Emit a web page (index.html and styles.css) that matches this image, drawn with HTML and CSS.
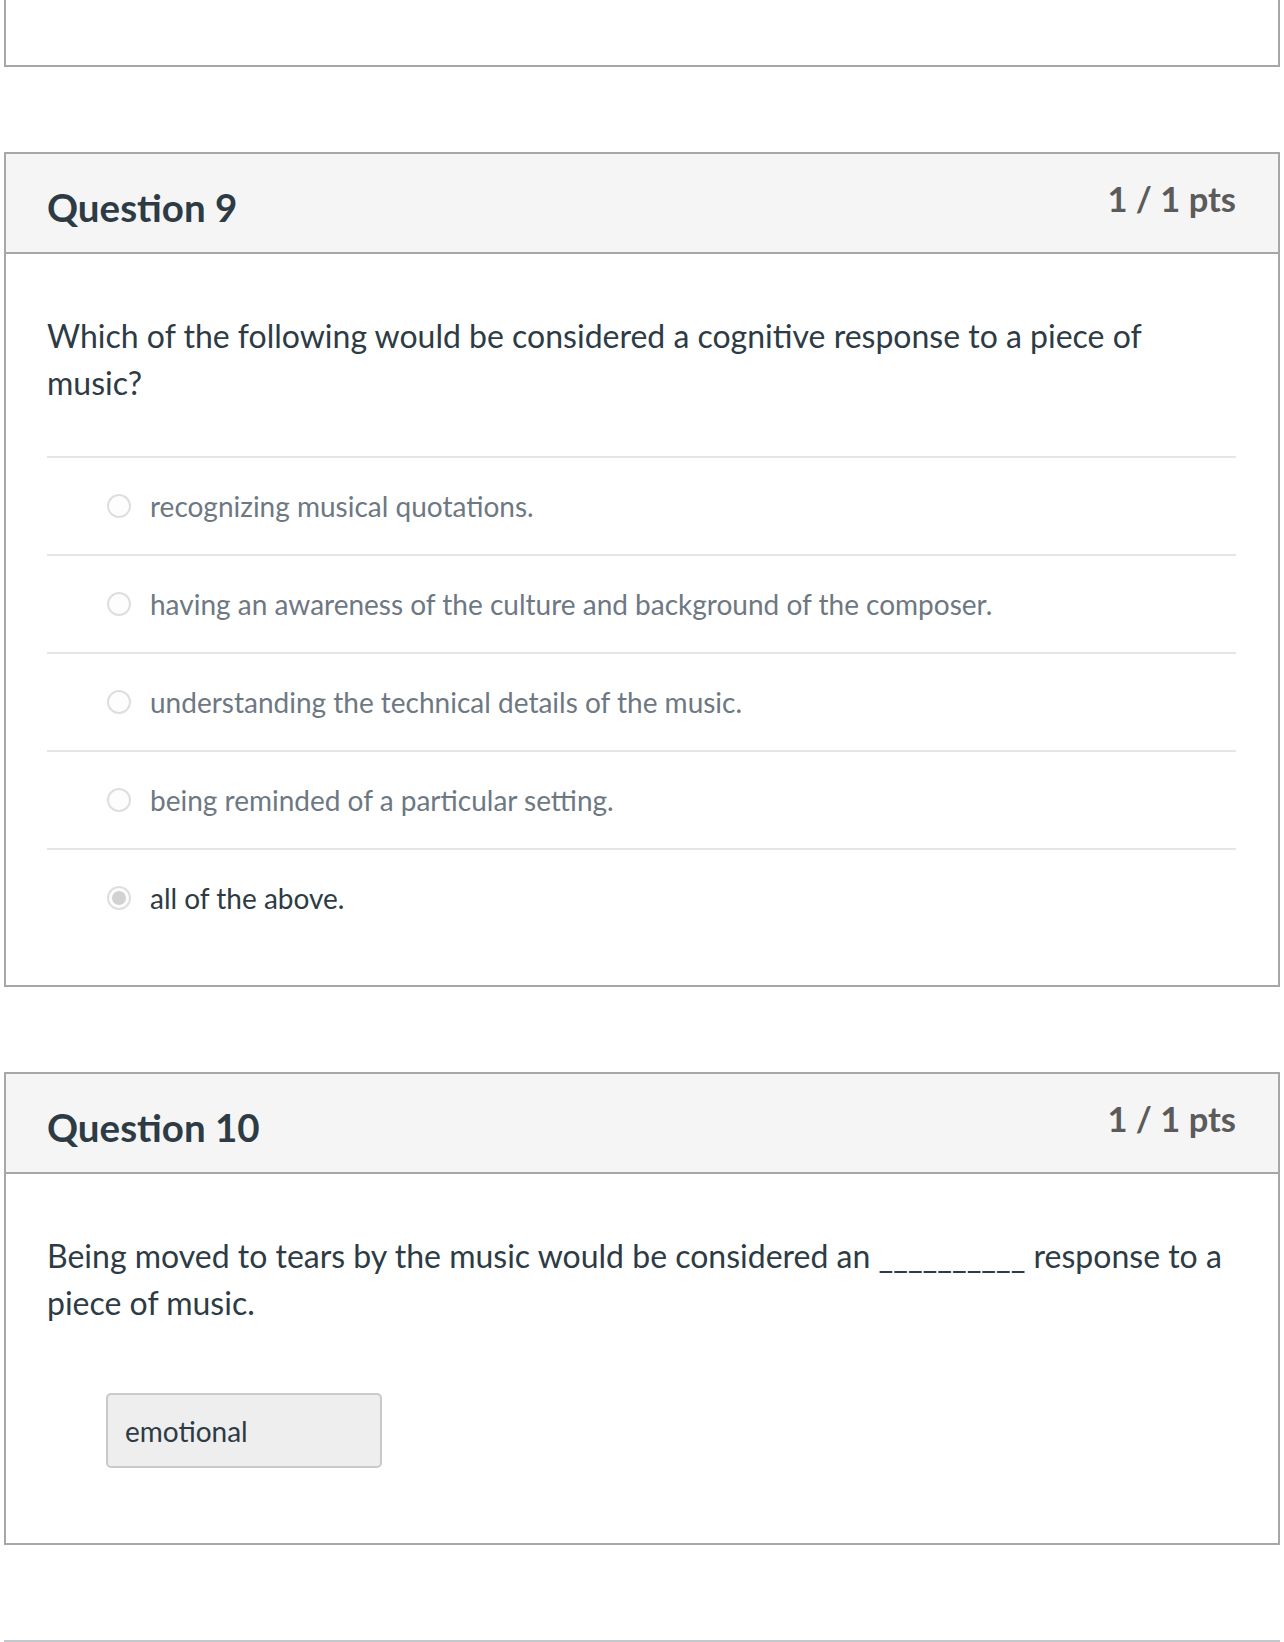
FILE: index.html
```html
<!DOCTYPE html>
<html lang="en">
<head>
<meta charset="utf-8">
<title>Quiz results</title>
<link rel="stylesheet" href="styles.css">
</head>
<body>
<div class="page">
  <div class="card card-prev"></div>

  <div class="card question">
    <div class="q-header">
      <h2 class="q-title">Question 9</h2>
      <div class="q-pts">1 / 1 pts</div>
    </div>
    <div class="q-body">
      <div class="q-text">Which of the following would be considered a cognitive response to a piece of music?</div>
      <div class="answers">
        <div class="answer"><span class="radio"></span><span class="answer-label">recognizing musical quotations.</span></div>
        <div class="answer"><span class="radio"></span><span class="answer-label">having an awareness of the culture and background of the composer.</span></div>
        <div class="answer"><span class="radio"></span><span class="answer-label">understanding the technical details of the music.</span></div>
        <div class="answer"><span class="radio"></span><span class="answer-label">being reminded of a particular setting.</span></div>
        <div class="answer answer-selected"><span class="radio radio-checked"></span><span class="answer-label">all of the above.</span></div>
      </div>
    </div>
  </div>

  <div class="card question card-last">
    <div class="q-header">
      <h2 class="q-title">Question 10</h2>
      <div class="q-pts">1 / 1 pts</div>
    </div>
    <div class="q-body q-body-fill">
      <div class="q-text">Being moved to tears by the music would be considered an __________ response to a piece of music.</div>
      <div class="fill-answer">emotional</div>
    </div>
  </div>

  <div class="card card-next"></div>
</div>
</body>
</html>
```

FILE: styles.css
```css
html, body {
  margin: 0;
  padding: 0;
  background: #ffffff;
}

body {
  font-family: Lato, "Open Sans", "Liberation Sans", sans-serif;
  color: #2d3b45;
  overflow: hidden;
}

.page {
  padding: 0 4px;
}

.card {
  border: 2px solid #a7a7a7;
  background: #ffffff;
  margin-bottom: 85px;
}

.card-prev {
  border-top: 0;
  height: 65px;
}

.card-last {
  margin-bottom: 95px;
}

.card-next {
  border-bottom: 0;
  border-left: 0;
  border-right: 0;
  border-color: #c3c8cc;
  height: 0;
  margin-bottom: 0;
}

.q-header {
  display: flex;
  justify-content: space-between;
  align-items: flex-start;
  height: 98px;
  padding: 0 42px 0 41px;
  background: #f5f5f5;
  border-bottom: 2px solid #a7a7a7;
}

.q-title {
  margin: 34px 0 0;
  font-size: 38.5px;
  line-height: 1;
  font-weight: 700;
  color: #2d3b45;
}

.q-pts {
  margin-top: 28px;
  font-size: 34.5px;
  line-height: 1;
  font-weight: 700;
  color: #5b5b5b;
}

.q-body {
  padding: 58px 42px 39px 41px;
}

.q-body-fill {
  padding-bottom: 75px;
}

.q-text {
  max-width: 1182px;
  font-size: 32px;
  line-height: 47px;
  color: #2d3b45;
  margin-bottom: 50px;
}

.q-body-fill .q-text {
  margin-bottom: 67px;
}

.answer {
  display: flex;
  align-items: center;
  border-top: 2px solid #e6e6e6;
  padding: 28px 0;
}

.radio {
  box-sizing: border-box;
  flex: none;
  width: 24px;
  height: 24px;
  margin-left: 60px;
  margin-right: 19px;
  border: 2px solid #dedede;
  border-radius: 50%;
  background: #fdfdfd;
  position: relative;
}

.radio-checked::after {
  content: "";
  position: absolute;
  left: 3px;
  top: 3px;
  width: 14px;
  height: 14px;
  border-radius: 50%;
  background: #d2d2d2;
}

.answer-label {
  font-size: 28px;
  line-height: 40px;
  color: #6d7883;
}

.answer-selected .answer-label {
  color: #2d3b45;
}

.fill-answer {
  box-sizing: border-box;
  display: flex;
  align-items: center;
  width: 276px;
  height: 75px;
  margin-left: 59px;
  padding-left: 17px;
  border: 2px solid #cacaca;
  border-radius: 5px;
  background: #eeeeee;
  font-size: 28px;
  color: #2d3b45;
}
```
